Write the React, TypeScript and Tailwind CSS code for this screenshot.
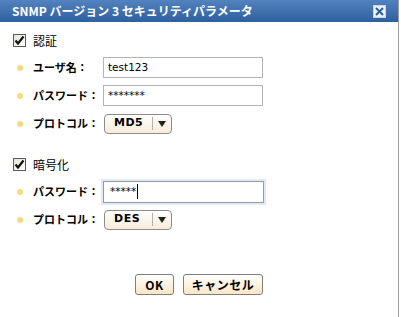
import React from 'react';

const jp = { fontFamily: '"Noto Sans CJK JP", "Noto Sans", sans-serif' };
const latin = { fontFamily: '"DejaVu Sans", "Noto Sans CJK JP", sans-serif' };

const CheckBox = () => (
  <span className="flex h-[13px] w-[13px] items-center justify-center border border-[#5a5a5a] bg-gradient-to-br from-[#e8e4da] to-white">
    <svg width="11" height="11" viewBox="0 0 11 11">
      <path d="M1.5 5.5 L4 8.5 L9.5 1.5" fill="none" stroke="#111" strokeWidth="2.2" />
    </svg>
  </span>
);

const Bullet = () => <span className="h-[6px] w-[6px] shrink-0 rounded-full bg-[#f8dc7a]" />;

const FieldLabel = ({ text }: { text: string }) => (
  <div className="flex w-[103px] shrink-0 items-center gap-[10px] pl-[17px]">
    <Bullet />
    <span className="whitespace-nowrap text-[11px] font-bold text-black" style={jp}>
      {text}
    </span>
  </div>
);

const TextInput = ({ value, focused }: { value: string; focused?: boolean }) => (
  <div
    className={
      focused
        ? 'flex h-[22px] w-[161px] items-center border border-[#9a9a9a] bg-white pl-[6px] shadow-[0_0_0_2px_#dcebfb]'
        : 'flex h-[21px] w-[160px] items-center border border-[#b4b4b4] bg-white pl-[4px]'
    }
  >
    <span className="text-[10.5px] text-black" style={latin}>{value}</span>
    {focused && <span className="ml-[1px] h-[15px] w-[1px] bg-black" />}
  </div>
);

const Select = ({ value }: { value: string }) => (
  <div className="ml-[1px] flex h-[20px] w-[68px] items-center rounded-[4px] border border-[#8c8c8c] bg-gradient-to-b from-white to-[#f6ecd8]">
    <span className="w-[47px] pl-[9px] text-[11px] font-bold tracking-[0.5px] text-black" style={latin}>{value}</span>
    <span className="h-[13px] w-[1px] bg-[#b0b0b0]" />
    <span className="flex flex-1 items-center justify-center">
      <svg width="8" height="6" viewBox="0 0 8 6">
        <path d="M0 0 H8 L4 6 Z" fill="#222" />
      </svg>
    </span>
  </div>
);

const Row = ({ label, children }: { label: string; children: React.ReactNode }) => (
  <div className="flex h-[21px] items-center">
    <FieldLabel text={label} />
    {children}
  </div>
);

const Button = ({ text, w }: { text: string; w: string }) => (
  <button
    className={`flex h-[21px] ${w} items-center justify-center rounded-[3px] border border-[#7d7d7d] bg-gradient-to-b from-white to-[#fbe6c4] text-[12px] font-bold tracking-[0.5px] text-black`}
    style={jp}
  >
    {text}
  </button>
);

export default function App() {
  return (
    <div className="h-[317px] w-[401px] bg-white">
      <div className="flex h-[317px] w-[399px] flex-col border-r border-[#9c9c9c]">
        <div className="flex h-[22px] items-center justify-between bg-gradient-to-b from-[#5283bf] to-[#2f609e] pl-[12px] pr-[12px]">
          <span className="text-[12px] font-bold text-white" style={jp}>
            SNMP バージョン 3 セキュリティパラメータ
          </span>
          <span className="flex h-[13px] w-[13px] items-center justify-center border border-[#c8d4e4] bg-[#eef2f8]">
            <svg width="9" height="9" viewBox="0 0 9 9">
              <path d="M1 1 L8 8 M8 1 L1 8" stroke="#2f5f9e" strokeWidth="2" />
            </svg>
          </span>
        </div>

        <div className="flex flex-col pt-[12px]">
          <div className="flex h-[13px] items-center gap-[7px] pl-[13px]">
            <CheckBox />
            <span className="text-[12px] text-black" style={jp}>認証</span>
          </div>
          <div className="mt-[10px] flex flex-col gap-[7px]">
            <Row label="ユーザ名：">
              <TextInput value="test123" />
            </Row>
            <Row label="パスワード：">
              <TextInput value="*******" />
            </Row>
            <Row label="プロトコル：">
              <Select value="MD5" />
            </Row>
          </div>

          <div className="mt-[24px] flex h-[13px] items-center gap-[7px] pl-[13px]">
            <CheckBox />
            <span className="text-[12px] text-black" style={jp}>暗号化</span>
          </div>
          <div className="mt-[10px] flex flex-col gap-[7px]">
            <Row label="パスワード：">
              <TextInput value="*****" focused />
            </Row>
            <Row label="プロトコル：">
              <Select value="DES" />
            </Row>
          </div>

          <div className="mt-[44px] flex gap-[9px] pl-[135px]">
            <Button text="OK" w="w-[39px]" />
            <Button text="キャンセル" w="w-[80px]" />
          </div>
        </div>
      </div>
    </div>
  );
}
